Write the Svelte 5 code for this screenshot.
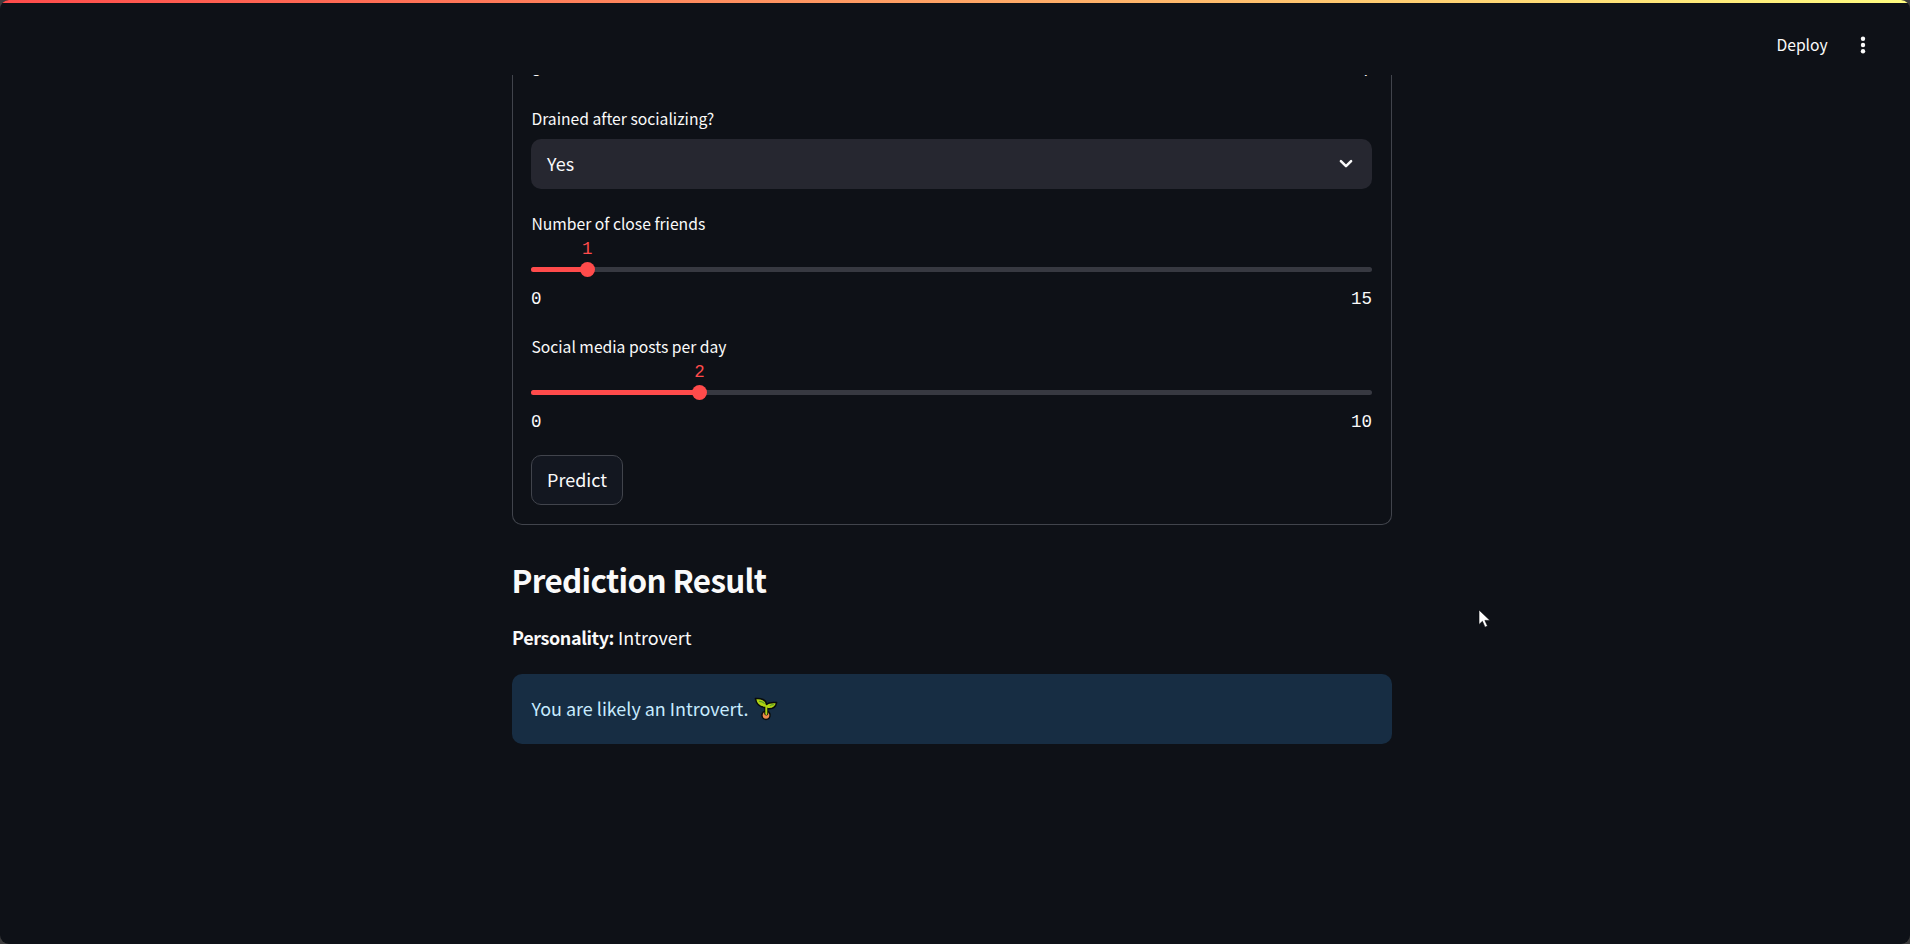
<script>
  const sliders = [
    { label: 'Number of close friends', value: 1, min: 0, max: 15 },
    { label: 'Social media posts per day', value: 2, min: 0, max: 10 }
  ];
  const percent = (s) => ((s.value - s.min) / (s.max - s.min)) * 100;
</script>

<div class="backdrop">
  <div class="app">
    <div class="decoration"></div>
    <header>
      <span class="deploy">Deploy</span>
      <svg class="dots" width="6" height="18" viewBox="0 0 6 18" fill="#fafafa">
        <circle cx="3" cy="2.8" r="2.2" /><circle cx="3" cy="9" r="2.2" /><circle cx="3" cy="15.2" r="2.2" />
      </svg>
    </header>
    <main>
      <section class="card">
        <div class="range previous"><span>0</span><span>7</span></div>
        <div class="label first">Drained after socializing?</div>
        <div class="select">
          <span>Yes</span>
          <svg width="14" height="10" viewBox="0 0 14 10" fill="none" stroke="#fafafa" stroke-width="2.5" stroke-linecap="round" stroke-linejoin="round">
            <path d="M1.9 2.1 7 7.2l5.1-5.1" />
          </svg>
        </div>
        {#each sliders as s}
          <div class="slider">
            <div class="label">{s.label}</div>
            <div class="track">
              <div class="fill" style="width: {percent(s)}%"></div>
              <div class="thumb" style="left: {percent(s)}%"><span class="value">{s.value}</span></div>
            </div>
            <div class="range"><span>{s.min}</span><span>{s.max}</span></div>
          </div>
        {/each}
        <button><span>Predict</span></button>
      </section>
      <h2>Prediction Result</h2>
      <p><strong>Personality:</strong> Introvert</p>
      <div class="alert">
        <span>You are likely an Introvert.</span>
        <svg width="24" height="24" viewBox="0 0 24 24" stroke="#080c0d" stroke-width="1.5" stroke-linejoin="round" stroke-linecap="round">
          <circle cx="12" cy="18.3" r="4.1" fill="#f08c4c" />
          <path d="M12.3 16.5V10" stroke-width="4" />
          <path d="M12 10.5C6.5 10.5 2.3 7 1.4 1.6 7 .8 12.2 2.8 12.6 7.6c2-2.1 5.6-2.4 10-2-.8 4.6-4.2 6.6-9.2 6z" fill="#b1d312" />
          <path d="M12.3 17V9.5" stroke="#b1d312" stroke-width="2" />
          <path d="M5.5 4.4c2.3.2 3.7.9 4.7 2M16.2 8.6c1.1-.7 2-.9 3.2-1" fill="none" stroke="#5d9c26" stroke-width="1.1" />
        </svg>
      </div>
    </main>
    <svg class="cursor" width="14" height="20" viewBox="0 0 14 20">
      <path d="M1 1v14.5l3.4-3.2 2.6 5.9 2.5-1.1-2.6-5.7H12z" fill="#fff" stroke="#05070a" stroke-width=".6" />
    </svg>
  </div>
</div>

<style>
  :global(body) { margin: 0; background: #3c3c3d; }
  .backdrop { height: 944px; overflow: hidden; background: #3c3c3d; }
  .app {
    height: 944px;
    box-sizing: border-box;
    overflow: hidden;
    position: relative;
    border-radius: 9px;
    background: #0e1117;
    color: #fafafa;
    font-family: "Noto Sans CJK SC", "Noto Sans", sans-serif;
    font-size: 17.95px;
    line-height: 26px;
  }
  .decoration { height: 3px; background: linear-gradient(90deg, #ff4b4b, #fffd80); }
  header {
    height: 72px;
    box-sizing: border-box;
    padding: 0 44.5px 12px 0;
    display: flex;
    justify-content: flex-end;
    align-items: flex-end;
    gap: 31.8px;
  }
  .deploy { font-size: 15.7px; line-height: 34px; height: 35px; }
  .dots { margin-bottom: 9px; }
  main { display: flow-root; width: 880px; height: 869px; margin-left: 512px; overflow: hidden; }
  .card {
    display: flow-root;
    height: 450px;
    box-sizing: border-box;
    border: 1px solid #41444c;
    border-top: 0;
    border-radius: 0 0 10px 10px;
    padding: 0 19px 0 18px;
  }
  .range {
    display: flex;
    justify-content: space-between;
    height: 25px;
    font: 17.5px/25px "Liberation Mono", monospace;
  }
  .previous { margin-top: -16px; }
  .label { padding-left: 0.4px; font-size: 15.7px; line-height: 24px; height: 24px; white-space: nowrap; }
  .first { margin-top: 23px; }
  .select {
    display: flex;
    align-items: center;
    justify-content: space-between;
    height: 50px;
    margin-top: 8px;
    box-sizing: border-box;
    padding: 0 19px 0 16px;
    border-radius: 10px;
    background: #262730;
  }
  .select span, .alert span, button span { display: block; padding-bottom: 2px; }
  .slider { height: 123px; box-sizing: border-box; padding-top: 23px; }
  .track { position: relative; height: 5px; margin: 31px 0 15px; border-radius: 3px; background: #373941; }
  .fill { height: 5px; border-radius: 3px; background: #ff4b4b; }
  .thumb {
    position: absolute;
    top: -5px;
    width: 15px;
    height: 15px;
    margin-left: -7.5px;
    border-radius: 50%;
    background: #ff4b4b;
  }
  .value {
    position: absolute;
    left: 2.5px;
    bottom: 15px;
    color: #ff4b4b;
    font: 17.5px/25px "Liberation Mono", monospace;
  }
  button {
    display: block;
    width: 92px;
    height: 50px;
    margin-top: 20px;
    padding: 0;
    border: 1px solid #41444c;
    border-radius: 10px;
    background: #131720;
    color: inherit;
    font: inherit;
  }
  h2 { margin: 31px 0 0 -0.5px; font-size: 31.4px; line-height: 48px; font-weight: 600; letter-spacing: -0.65px; white-space: nowrap; }
  p { margin: 20px 0 0; line-height: 26px; }
  strong { font-weight: 600; letter-spacing: -0.38px; }
  .alert {
    display: flex;
    align-items: center;
    gap: 5.5px;
    height: 70px;
    margin-top: 24px;
    box-sizing: border-box;
    padding-left: 19.5px;
    border-radius: 10px;
    background: #172d43;
    color: #c7ebff;
  }
  .cursor { position: absolute; left: 1477.5px; top: 609px; }
</style>
